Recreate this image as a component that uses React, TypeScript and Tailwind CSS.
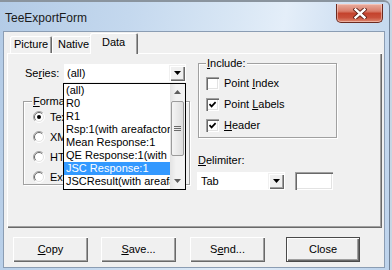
import React from "react";

const U = ({ children }: { children: React.ReactNode }) => (
  <span className="underline decoration-[1px] underline-offset-[1px]">{children}</span>
);

const DownTri = ({ color = "#000" }: { color?: string }) => (
  <svg width="7" height="4" viewBox="0 0 7 4">
    <polygon points="0,0 7,0 3.5,4" fill={color} />
  </svg>
);

const UpTri = ({ color = "#000" }: { color?: string }) => (
  <svg width="7" height="4" viewBox="0 0 7 4">
    <polygon points="0,4 7,4 3.5,0" fill={color} />
  </svg>
);

const Radio = ({ checked }: { checked?: boolean }) => (
  <svg width="12" height="12" viewBox="0 0 12 12" className="shrink-0">
    <circle cx="6" cy="6" r="5.5" fill="#fff" />
    <path d="M2.1 9.9 A5.5 5.5 0 0 1 9.9 2.1" stroke="#a0a0a0" strokeWidth="1" fill="none" />
    <path d="M2.8 9.2 A4.5 4.5 0 0 1 9.2 2.8" stroke="#696969" strokeWidth="1" fill="none" />
    <path d="M9.9 2.1 A5.5 5.5 0 0 1 2.1 9.9" stroke="#ffffff" strokeWidth="1" fill="none" />
    <path d="M9.2 2.8 A4.5 4.5 0 0 1 2.8 9.2" stroke="#e3e3e3" strokeWidth="1" fill="none" />
    {checked && <circle cx="6" cy="6" r="2" fill="#000" />}
  </svg>
);

const Check = ({ checked }: { checked?: boolean }) => (
  <div className="w-[13px] h-[13px] shrink-0 bg-white shadow-[inset_1px_1px_0_#a0a0a0,inset_2px_2px_0_#696969,inset_-1px_-1px_0_#ffffff,inset_-2px_-2px_0_#e3e3e3] flex items-center justify-center">
    {checked && (
      <svg width="9" height="9" viewBox="0 0 9 9">
        <path d="M1.5 4.2 L3.6 6.4 L7.6 2.2" stroke="#000" strokeWidth="1.7" fill="none" />
      </svg>
    )}
  </div>
);

const ComboBtn = () => (
  <div className="w-[16px] h-[16px] bg-[#f0f0f0] shadow-[inset_1px_1px_0_#f0f0f0,inset_2px_2px_0_#fff,inset_-1px_-1px_0_#696969,inset_-2px_-2px_0_#a0a0a0] flex items-center justify-center">
    <DownTri />
  </div>
);

const Btn = ({ children, def }: { children: React.ReactNode; def?: boolean }) => (
  <div
    className={
      def
        ? "h-[25px] w-[74px] flex items-center justify-center bg-[#f0f0f0] shadow-[inset_0_0_0_1px_#4a4a4a,inset_2px_2px_0_#fff,inset_-2px_-2px_0_#696969,inset_-3px_-3px_0_#a0a0a0]"
        : "h-[25px] w-[75px] flex items-center justify-center bg-[#f0f0f0] shadow-[inset_1px_1px_0_#fff,inset_-1px_-1px_0_#696969,inset_-2px_-2px_0_#a0a0a0]"
    }
  >
    {children}
  </div>
);

const items = [
  "(all)",
  "R0",
  "R1",
  "Rsp:1(with areafactor)",
  "Mean Response:1",
  "QE Response:1(with areafactor)",
  "JSC Response:1",
  "JSCResult(with areafactor)",
];

export default function App() {
  return (
    <div className="w-[392px] h-[270px] overflow-hidden bg-[#c8d6e4] font-['Liberation_Sans',Arial,sans-serif] text-[11px] text-black">
      <div className="w-[390px] h-[270px] flex flex-col rounded-tr-[6px] border-t-2 border-r border-t-[#8a949e] border-r-[#6f8096] bg-[linear-gradient(100deg,#b3cbe6_0%,#c4d8ee_30%,#d9e7f5_55%,#e4eef9_66%,#cadcf0_85%,#bdd3ec_100%)]">
        {/* title bar */}
        <div className="h-[30px] flex items-start pl-[5px] pr-[6px]">
          <div className="mt-[9px] text-[12px] leading-[14px] text-[#1a1a1a]">TeeExportForm</div>
          <div className="ml-auto mt-[2px] w-[47px] h-[19px] rounded-b-[5px] border border-[#6b2a20] border-t-0 bg-[linear-gradient(180deg,#e9ad9f_0%,#d97d6a_40%,#c4432d_52%,#c9503a_75%,#dd8a72_100%)] shadow-[inset_0_0_0_1px_rgba(255,220,210,0.5)] flex items-center justify-center">
            <svg width="14" height="11" viewBox="0 0 14 11">
              <path d="M2.5 1.5 L11.5 9.5 M11.5 1.5 L2.5 9.5" stroke="#5b1d14" strokeWidth="4.2" strokeLinecap="square" />
              <path d="M2.5 1.5 L11.5 9.5 M11.5 1.5 L2.5 9.5" stroke="#ffffff" strokeWidth="2.4" strokeLinecap="square" />
            </svg>
          </div>
        </div>

        {/* client area */}
        <div className="ml-[4px] w-[380px] h-[235px] bg-[#f0f0f0] flex flex-col pl-[3px] pr-[2px] pt-[1px] shadow-[0_0_0_1px_#8b9db3]">
          {/* tabs */}
          <div className="h-[21px] flex items-start relative z-10">
            <div className="ml-[3px] mt-[3px] w-[42px] h-[17px] rounded-t-[2px] bg-[#f0f0f0] shadow-[inset_1px_1px_0_#fff,inset_-1px_0_0_#696969,inset_-2px_0_0_#a0a0a0] flex items-center pl-[4px]">
              Picture
            </div>
            <div className="mt-[3px] w-[40px] h-[17px] rounded-t-[2px] bg-[#f0f0f0] shadow-[inset_1px_1px_0_#fff,inset_-1px_0_0_#696969,inset_-2px_0_0_#a0a0a0] flex items-center pl-[6px]">
              Native
            </div>
            <div className="-ml-[2px] w-[48px] h-[21px] rounded-t-[2px] bg-[#f0f0f0] shadow-[inset_1px_1px_0_#fff,inset_-1px_0_0_#696969,inset_-2px_0_0_#a0a0a0] flex items-center pl-[12px] pb-[2px]">
              Data
            </div>
          </div>

          {/* tab sheet */}
          <div className="-mt-[1px] h-[175px] relative bg-[#f0f0f0] shadow-[inset_1px_1px_0_#fff,inset_-1px_-1px_0_#696969,inset_-2px_-2px_0_#a0a0a0] flex pl-[16px]">
            {/* left column */}
            <div className="w-[167px] flex flex-col">
              <div className="mt-[11px] h-[18px] flex items-center">
                <div className="w-[41px] pl-[2px]">
                  Se<U>r</U>ies:
                </div>
                <div className="w-[122px] h-[18px] bg-white flex items-center justify-between pl-[3px] pr-[1px]">
                  <span>(all)</span>
                  <ComboBtn />
                </div>
              </div>

              <div className="mt-[19px] h-[84px] relative border border-[#a0a0a0] shadow-[inset_1px_1px_0_#fff,1px_1px_0_#fff] pt-[5px] pl-[9px]">
                <span className="absolute -top-[7px] left-[8px] px-[1px] leading-[12px] bg-[#f0f0f0]">
                  <U>F</U>ormat
                </span>
                {[
                  ["Text", true],
                  ["XML", false],
                  ["HTML Table", false],
                  ["Excel", false],
                ].map(([t, c]) => (
                  <div key={t as string} className="h-[20px] flex items-center gap-[5px]">
                    <Radio checked={c as boolean} />
                    <span>{t as string}</span>
                  </div>
                ))}
              </div>
            </div>

            {/* right column */}
            <div className="ml-[8px] w-[139px] flex flex-col">
              <div className="mt-[10px] h-[75px] relative border border-[#a0a0a0] shadow-[inset_1px_1px_0_#fff,1px_1px_0_#fff] pt-[9px] pl-[7px]">
                <span className="absolute -top-[7px] left-[7px] px-[1px] leading-[12px] bg-[#f0f0f0]">
                  <U>I</U>nclude:
                </span>
                <div className="h-[21px] flex items-center gap-[5px]">
                  <Check />
                  <span>
                    Point <U>I</U>ndex
                  </span>
                </div>
                <div className="h-[21px] flex items-center gap-[5px]">
                  <Check checked />
                  <span>
                    Point <U>L</U>abels
                  </span>
                </div>
                <div className="h-[21px] flex items-center gap-[5px]">
                  <Check checked />
                  <span>
                    <U>H</U>eader
                  </span>
                </div>
              </div>

              <div className="mt-[16px] leading-[13px]">
                <U>D</U>elimiter:
              </div>
              <div className="mt-[5px] h-[18px] flex">
                <div className="-ml-[1px] w-[88px] h-[18px] bg-white flex items-center justify-between pl-[4px] pr-[1px]">
                  <span>Tab</span>
                  <ComboBtn />
                </div>
                <div className="ml-[10px] w-[38px] h-[18px] bg-white shadow-[inset_1px_1px_0_#a0a0a0,inset_2px_2px_0_#696969,inset_-1px_-1px_0_#ffffff,inset_-2px_-2px_0_#e3e3e3]" />
              </div>
            </div>

            {/* dropdown popup */}
            <div className="absolute left-[56px] top-[30px] w-[123px] h-[107px] border border-black bg-white flex z-20">
              <div className="w-[106px] flex flex-col">
                {items.map((t) => (
                  <div
                    key={t}
                    className={
                      t === "JSC Response:1"
                        ? "h-[13px] leading-[13px] pl-[2px] whitespace-nowrap overflow-hidden bg-[#3399ff] text-white"
                        : "h-[13px] leading-[13px] pl-[2px] whitespace-nowrap overflow-hidden"
                    }
                  >
                    {t}
                  </div>
                ))}
              </div>
              <div className="w-[15px] flex flex-col bg-[linear-gradient(90deg,#e3e3e3,#f2f2f2_40%,#f2f2f2)]">
                <div className="h-[16px] flex items-center justify-center">
                  <UpTri color="#5d5d5d" />
                </div>
                <div className="flex-1 pt-[1px] px-[1px]">
                  <div className="h-[55px] rounded-[2px] border border-[#9b9b9b] bg-[linear-gradient(90deg,#f4f4f4,#dedede)] flex flex-col items-center justify-center gap-[1px]">
                    <div className="w-[7px] h-[1px] bg-[#6a6a6a]" />
                    <div className="w-[7px] h-[1px] bg-[#6a6a6a]" />
                    <div className="w-[7px] h-[1px] bg-[#6a6a6a]" />
                  </div>
                </div>
                <div className="h-[16px] flex items-center justify-center">
                  <DownTri color="#5d5d5d" />
                </div>
              </div>
            </div>
          </div>

          {/* buttons */}
          <div className="mt-[9px] h-[25px] flex pl-[6px]">
            <Btn>
              <U>C</U>opy
            </Btn>
            <div className="ml-[13px]">
              <Btn>
                <U>S</U>ave...
              </Btn>
            </div>
            <div className="ml-[14px]">
              <Btn>
                S<U>e</U>nd...
              </Btn>
            </div>
            <div className="ml-[21px]">
              <Btn def>Close</Btn>
            </div>
          </div>
        </div>
      </div>
    </div>
  );
}
